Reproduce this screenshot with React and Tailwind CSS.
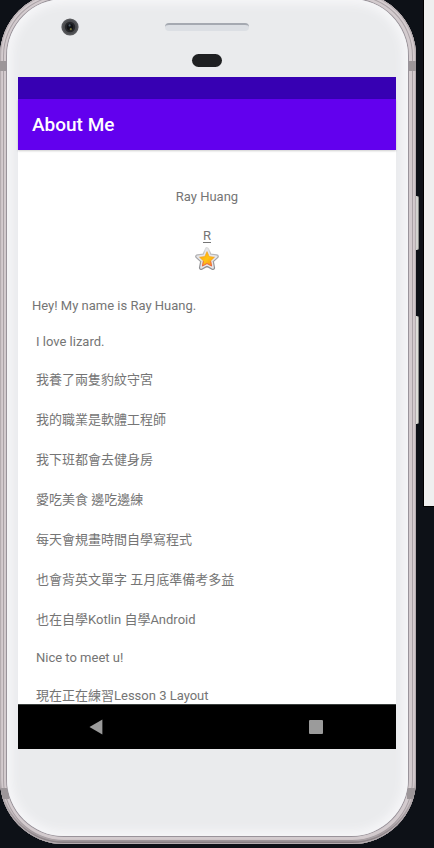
const LINES = [
  { text: 'Hey! My name is Ray Huang.', first: true },
  { text: 'I love lizard.' },
  { text: '我養了兩隻豹紋守宮', cjk: true },
  { text: '我的職業是軟體工程師', cjk: true },
  { text: '我下班都會去健身房', cjk: true },
  { text: '愛吃美食 邊吃邊練', cjk: true },
  { text: '每天會規畫時間自學寫程式', cjk: true },
  { text: '也會背英文單字 五月底準備考多益', cjk: true },
  { text: '也在自學Kotlin 自學Android', cjk: true },
  { text: 'Nice to meet u!' },
  { text: '現在正在練習Lesson 3 Layout', cjk: true },
];

const STAR = 'M13 3.4 L15.8 9.6 L22.6 10.4 L17.6 15 L18.9 21.8 L13 18.5 L7.1 21.8 L8.4 15 L3.4 10.4 L10.2 9.6 Z';

function StarIcon() {
  return (
    <svg width="26" height="26" viewBox="0 0 26 26" role="img" aria-label="Star">
      <defs>
        <linearGradient id="starFill" x1="0" y1="0" x2="1" y2="1">
          <stop offset="0" stopColor="#ff9d0a" />
          <stop offset="0.5" stopColor="#ffc414" />
          <stop offset="1" stopColor="#f98a1c" />
        </linearGradient>
        <linearGradient id="starRim" x1="0" y1="0" x2="0" y2="1">
          <stop offset="0" stopColor="#dcdcdc" />
          <stop offset="0.4" stopColor="#a6a6a8" />
          <stop offset="1" stopColor="#8f8f92" />
        </linearGradient>
      </defs>
      <path d={STAR} fill="#b9b9bc" stroke="url(#starRim)" strokeWidth="4.4" strokeLinejoin="round" />
      <path d={STAR} fill="#e6e6e9" stroke="#e6e6e9" strokeWidth="2" strokeLinejoin="round" />
      <path
        d="M13 5.6 L15.2 10.5 L20.5 11.2 L16.6 14.9 L17.6 20 L13 17.5 L8.4 20 L9.4 14.9 L5.5 11.2 L10.8 10.5 Z"
        fill="url(#starFill)"
        stroke="#f0a020"
        strokeWidth="0.6"
        strokeLinejoin="round"
      />
      <path d="M9.4 15.2 L8.4 20 L13 17.5 L17.6 20 L16.6 15.2" fill="none" stroke="#ea5a44" strokeWidth="0.8" />
    </svg>
  );
}

function Camera() {
  return (
    <svg width="18" height="18" viewBox="0 0 18 18" aria-hidden="true">
      <circle cx="9" cy="9" r="8.6" fill="#58595c" />
      <circle cx="9" cy="9" r="7" fill="#4b4c4f" />
      <circle cx="9" cy="9" r="5.2" fill="#242528" />
      <circle cx="9" cy="9" r="3.2" fill="#101114" />
      <circle cx="8.6" cy="7.4" r="1.1" fill="#4c5a66" />
      <circle cx="9.8" cy="11.2" r="1.1" fill="#77743a" />
    </svg>
  );
}

function Bezel() {
  return (
    <div className="h-[78px] pt-[19px]">
      <div className="grid h-[18px] grid-cols-[1fr_84px_1fr] items-center">
        <div className="flex pl-[43px]">
          <Camera />
        </div>
        <div className="h-[8px] rounded-full border-t-2 border-[#a5a9b1] bg-[#dcdfe4]" />
      </div>
      <div className="mx-auto mt-[18px] h-[13px] w-[30px] rounded-full bg-[#1f2022]" />
    </div>
  );
}

function Screen() {
  return (
    <div className="bg-white">
      <div className="h-[22px] bg-[#3700b3]" />
      <header className="relative flex h-[51px] items-center bg-[#6200ee] px-[14px] shadow-[0_1px_2px_rgba(0,0,0,0.2)]">
        <h1 className="text-[19px] leading-6 font-medium text-white">About Me</h1>
      </header>
      <main className="h-[554px] overflow-hidden px-[14px] pt-[37px] text-[13px] text-[#757575]">
        <div className="flex flex-col items-center">
          <p className="leading-5">Ray Huang</p>
          <p className="mt-[19px] leading-5 underline underline-offset-2">R</p>
          <StarIcon />
        </div>
        <div className="mt-4">
          {LINES.map((line) => (
            <p
              key={line.text}
              className={`whitespace-nowrap ${line.cjk ? 'leading-[40px]' : 'leading-[36px]'} ${line.first ? '' : 'pl-1'}`}
            >
              {line.text}
            </p>
          ))}
        </div>
      </main>
      <nav className="flex h-[45px] items-center justify-between border-t border-[#3a3f3d] bg-black pr-[56px] pl-[54px]">
        <button type="button" aria-label="Back" className="flex h-10 w-12 items-center justify-center">
          <svg width="14" height="16" viewBox="0 0 14 16" aria-hidden="true">
            <path d="M13.4 0.6 V15.4 L0.5 8 Z" fill="#9b9b9b" />
          </svg>
        </button>
        <button type="button" aria-label="Recent apps" className="flex h-10 w-12 items-center justify-center">
          <span className="size-[14px] rounded-[1px] bg-[#9b9b9b]" />
        </button>
      </nav>
    </div>
  );
}

export default function App() {
  return (
    <div className="flex min-h-screen items-start gap-[7px] overflow-hidden bg-[#0d1117] font-[Roboto,'Noto_Sans_CJK_TC',sans-serif]">
      <div className="relative -mt-2 min-w-0 flex-1">
        <span className="absolute top-[204px] -right-[3px] h-[54px] w-[5px] rounded-r-[2px] border-r border-[#8b8b89] bg-[#d2d3cf]" />
        <span className="absolute top-[324px] -right-[3px] h-[108px] w-[5px] rounded-r-[2px] border-r border-[#8b8b89] bg-[#dcddd8]" />
        <div className="relative overflow-hidden rounded-[64px] bg-[#d3cbce] px-[7px] pt-[7px] pb-[8px] shadow-[inset_0_0_0_1px_#b5adb0,inset_0_-3px_2px_#827a7e,inset_0_0_0_3px_#d3cbce,inset_0_0_0_4px_#aaa2a6]">
          <span className="absolute top-[69px] left-0 h-[10px] w-[7px] bg-[#9c9699]" />
          <span className="absolute top-[69px] right-0 h-[10px] w-[8px] bg-[#9c9699]" />
          <span className="absolute bottom-[45px] left-0 h-[11px] w-[9px] bg-[#9c9699]" />
          <span className="absolute right-0 bottom-[45px] h-[11px] w-[9px] bg-[#9c9699]" />
          <div className="relative mr-px rounded-[57px] bg-[#eaebed] pr-[12px] pb-[87px] pl-[11px] shadow-[0_0_0_1px_#99939a,inset_0_0_10px_5px_#f6f6f8]">
            <Bezel />
            <Screen />
          </div>
        </div>
      </div>
      <aside className="h-[507px] w-[11px] border-b border-l border-black bg-[#efefef]" />
    </div>
  );
}
